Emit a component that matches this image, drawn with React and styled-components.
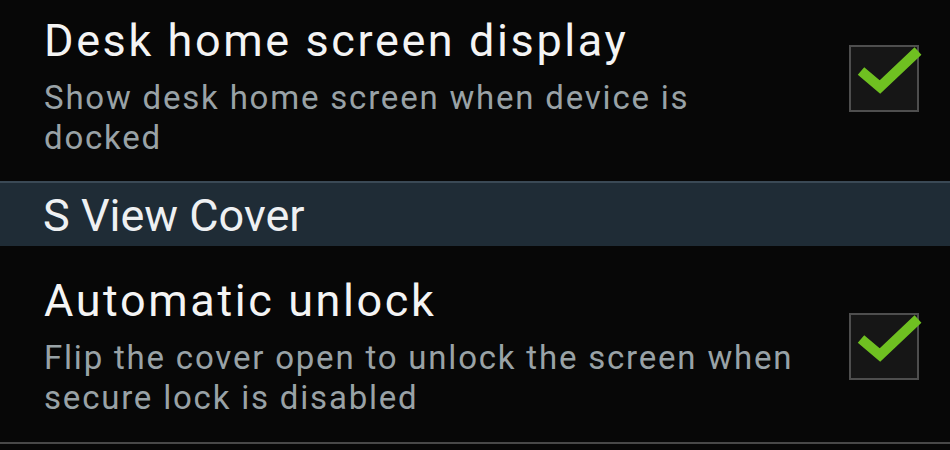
import React from 'react';
import styled, { createGlobalStyle } from 'styled-components';

const GlobalStyle = createGlobalStyle`
  html, body {
    margin: 0;
    padding: 0;
    background: #070707;
    font-family: Roboto, 'Noto Sans', sans-serif;
    overflow: hidden;
  }
`;

const Screen = styled.div`
  width: 950px;
  height: 450px;
  background: #070707;
  display: flex;
  flex-direction: column;
  overflow: hidden;
`;

const Item = styled.div`
  display: flex;
  align-items: center;
  justify-content: space-between;
  padding: ${props => props.pad || '0'};
  border-bottom: ${props => props.divider ? '2px solid #484848' : 'none'};
`;

const Texts = styled.div`
  display: flex;
  flex-direction: column;
  padding-left: 44px;
`;

const Title = styled.div`
  color: #f4f4f4;
  font-size: 45px;
  line-height: 54px;
  letter-spacing: 2.6px;
  white-space: nowrap;
`;

const Summary = styled.div`
  color: #99a2a6;
  font-size: 33px;
  line-height: 40px;
  letter-spacing: 1.8px;
  margin-top: 10px;
  max-width: 760px;
`;

const SectionHeader = styled.div`
  height: 65px;
  background: #1f2c36;
  border-top: 2px solid #3a4955;
  display: flex;
  align-items: center;
  padding: 2px 0 0 43px;
  color: #eef0f2;
  font-size: 45px;
  box-sizing: border-box;
`;

const CheckBox = styled.div`
  position: relative;
  width: 66px;
  height: 63px;
  border: 2px solid #4e4e4e;
  background: #161616;
  margin-right: 31px;
  margin-bottom: ${props => props.raise || 0}px;
  flex-shrink: 0;
`;

const Tick = styled.svg`
  position: absolute;
  left: -2px;
  top: -2px;
  overflow: visible;
`;

const Check = ({ raise }) => (
  <CheckBox raise={raise}>
    <Tick width="70" height="67" viewBox="0 0 70 67">
      <path d="M12 26 L31 42 L69 6" fill="none" stroke="#6fc021" strokeWidth="10" strokeLinejoin="miter" />
    </Tick>
  </CheckBox>
);

const App = () => (
  <>
    <GlobalStyle />
    <Screen>
      <Item pad="14px 0 23px 0">
        <Texts>
          <Title>Desk home screen display</Title>
          <Summary>Show desk home screen when device is docked</Summary>
        </Texts>
        <Check raise={16} />
      </Item>
      <SectionHeader>S View Cover</SectionHeader>
      <Item pad="28px 0 24px 0" divider>
        <Texts>
          <Title>Automatic unlock</Title>
          <Summary>Flip the cover open to unlock the screen when secure lock is disabled</Summary>
        </Texts>
        <Check />
      </Item>
    </Screen>
  </>
);

export default App;
